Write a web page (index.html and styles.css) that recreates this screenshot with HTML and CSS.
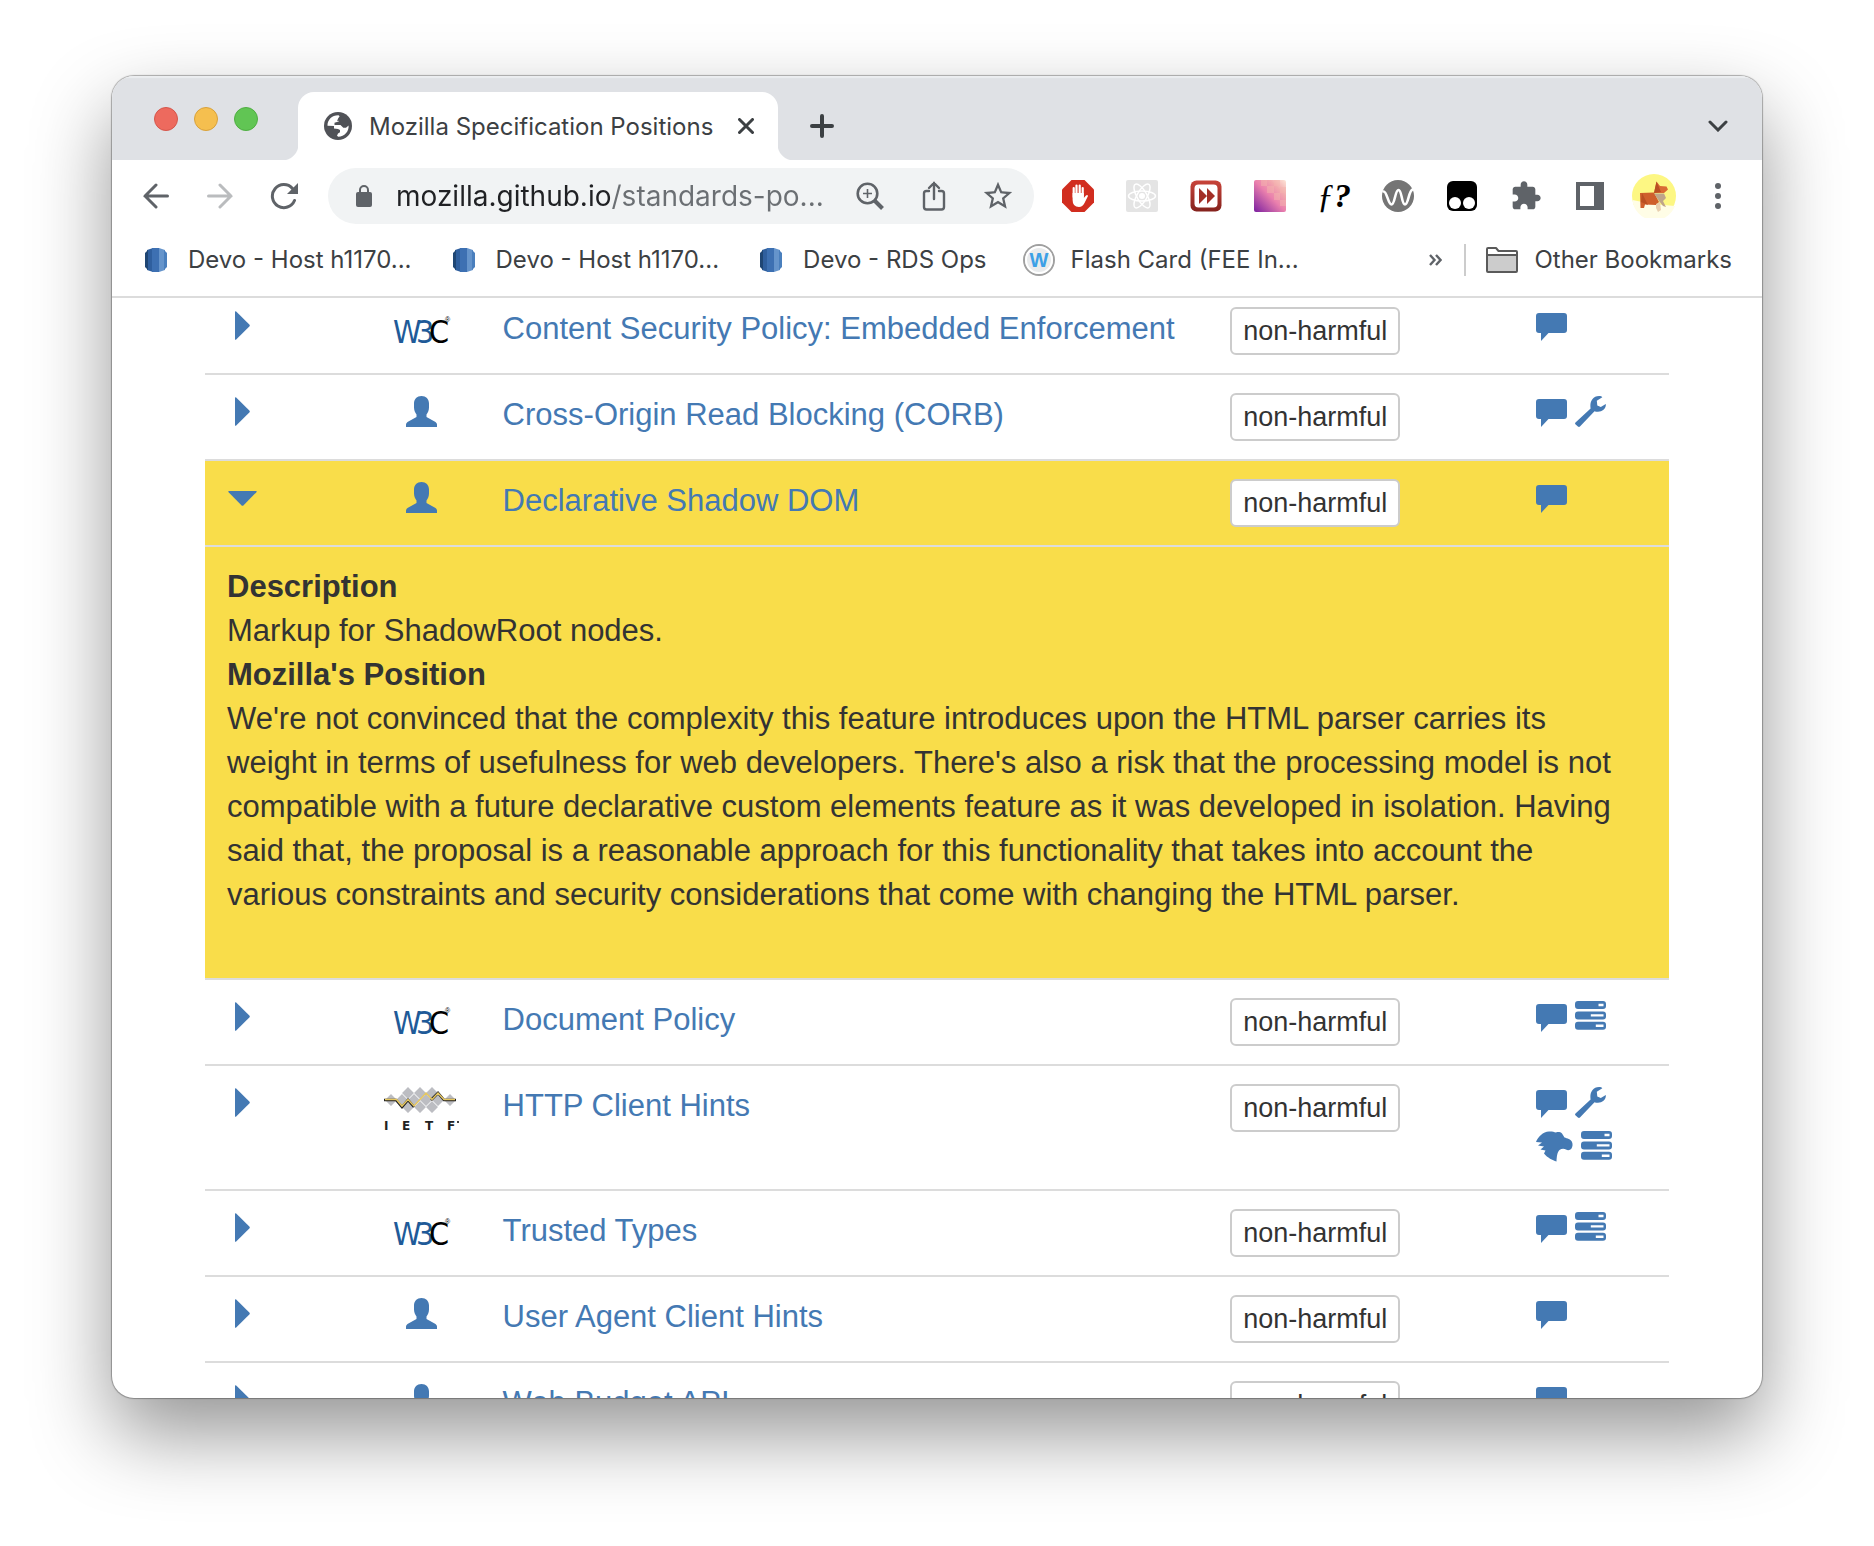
FILE: index.html
```html
<!DOCTYPE html>
<html lang="en">
<head>
<meta charset="utf-8">
<title>Mozilla Specification Positions</title>
<link rel="stylesheet" href="styles.css">
</head>
<body>
<svg class="sprite" aria-hidden="true">
  <symbol id="caret-right" viewBox="0 0 15 29"><path d="M0 1Q0-.5 1.2.6L14.3 13.400Q15.300 14.500 14.300 15.600L1.200 28.400Q0 29.500 0 28Z"/></symbol>
  <symbol id="caret-down" viewBox="0 0 29 15"><path d="M1 0Q-.5 0 .6 1.200L13.400 14.300Q14.500 15.300 15.600 14.300L28.400 1.200Q29.500 0 28 0Z"/></symbol>
  <symbol id="user" viewBox="0 0 31 31"><path d="M15.500 0C20 0 23 3 23 7.500V11.500C23 15 21.500 17 20.500 18.500V21L29.500 26Q31 27 31 28.500V31H0V28.500Q0 27 1.500 26L10.500 21V18.500C9.500 17 8 15 8 11.500V7.500C8 3 11 0 15.500 0Z"/></symbol>
  <symbol id="comment" viewBox="0 0 31 31"><path d="M3 3H28Q31 3 31 6V20Q31 23 28 23H12.500L5 31V23H3Q0 23 0 20V6Q0 3 3 3Z"/></symbol>
  <symbol id="wrench" viewBox="0 0 31 31"><path d="M.5 26.500L15.600 12.500C14.500 6 17.500 0 24 0C25.500 0 27 .5 27.300 1.200L21.800 4.800L22.300 9.500L25.800 11L30.800 8C31.300 12.500 27.500 15.800 23 15.800C21.500 15.800 20.500 15.500 19.500 15.200L5.200 30.300Q4 31.400 2.900 30.400L.4 28.200Q-.3 27.400 .5 26.500Z"/></symbol>
  <symbol id="server" viewBox="0 0 31 31"><path fill-rule="evenodd" d="M3 0H28Q31 0 31 3V5Q31 8 28 8H3Q0 8 0 5V3Q0 0 3 0ZM23.500 2.800V5.200H28.500V2.800ZM3 10.400H28Q31 10.400 31 13.400V15.400Q31 18.400 28 18.400H3Q0 18.400 0 15.400V13.400Q0 10.400 3 10.400ZM15.800 13.200V15.600H28.500V13.200ZM3 20.800H28Q31 20.800 31 23.800V25.800Q31 28.800 28 28.800H3Q0 28.800 0 25.800V23.800Q0 20.800 3 20.800ZM20.800 23.600V26H28.500V23.600Z"/></symbol>
  <symbol id="raptor" viewBox="0 0 37 31"><path d="M0 11C2 6 7 .5 13 .5C16 .3 18 1 20 1.500C22 .8 24.500 1 26 2.500L28.500 6.500C31 7.500 35 8 36 11C37 13.500 36.500 15.500 35.500 17.500C34 19.500 31.500 19.500 30 18.500C28 17.300 25.500 17.500 23.500 19C21 21.500 20.800 26 20.500 30.500C16.500 29 11.500 27 8 22.500L9.500 19.500L4.500 18.500L8 15.500L2 14.500L6 11.500Z"/></symbol>
  <symbol id="w3c" viewBox="0 0 60 44">
    <g class="w3c-text"><text x="1" y="33" fill="#205a98">W</text><text x="24" y="33" fill="#205a98">3</text><text x="37" y="33" fill="#000">C</text></g>
    <text class="w3c-reg" x="53" y="12">®</text>
  </symbol>
  <symbol id="rds" viewBox="0 0 22 24"><path fill="#2f5f9e" d="M2 2L8 0V24L2 22Z"/><path fill="#1f4674" d="M0 5L3 2V22L0 19Z"/><path fill="#3d70b2" d="M7 0H14V24H7Z"/><path fill="#6594cb" d="M14 0L20 2V22L14 24Z"/><path fill="#4a7fbd" d="M19 2L22 5V19L19 22Z"/></symbol>
</svg>

<main class="window">
  <header>
    <div class="tab-strip">
      <div class="lights">
        <button class="light red" aria-label="Close window"></button>
        <button class="light amber" aria-label="Minimise window"></button>
        <button class="light green" aria-label="Zoom window"></button>
      </div>
      <div class="tab">
        <svg width="28" height="28" viewBox="0 0 28 28"><circle cx="14" cy="14" r="14" fill="#505257"/><path fill="#fff" d="M3.500 13.800C3.200 8 8 3.200 14.500 3.300L16 4.500L14 6.800H17.500L14.500 9.500L10.500 10.800V13H16.500L19.300 15.800H22L24.600 13.500C25 19.500 20.500 24.500 14.300 24.700L13 23.800L14 21.500L16 20.300V18L14 17L10 16.500V14Z"/><path fill="#505257" d="M15.500 4.300L13 8.800L15.800 9L17.300 13L21 14.500L25 12L22 6.500Z"/></svg>
        <span class="tab-title">Mozilla Specification Positions</span>
        <button class="tab-close" aria-label="Close tab"><svg width="16" height="16" viewBox="0 0 16 16" fill="none" stroke="#3c4043" stroke-width="3" stroke-linecap="round"><path d="M1.500 1.500L14.500 14.500M14.500 1.500L1.500 14.500"/></svg></button>
      </div>
      <button class="strip-button new-tab" aria-label="New tab"><svg width="24" height="24" viewBox="0 0 24 24" fill="none" stroke="#3c4043" stroke-width="4" stroke-linecap="round"><path d="M12 2V22M2 12H22"/></svg></button>
      <button class="strip-button tab-search" aria-label="Search tabs"><svg width="20" height="12" viewBox="0 0 20 12" fill="none" stroke="#3c4043" stroke-width="3" stroke-linecap="round"><path d="M2 2L10 10L18 2"/></svg></button>
    </div>

    <div class="toolbar">
      <button class="slot" aria-label="Back"><svg width="26" height="26" viewBox="0 0 26 26" fill="none" stroke="#5f6368" stroke-width="3" stroke-linecap="round"><path d="M24.500 13H2M13 2L2 13L13 24"/></svg></button>
      <button class="slot" aria-label="Forward"><svg width="26" height="26" viewBox="0 0 26 26" fill="none" stroke="#babcbe" stroke-width="3" stroke-linecap="round"><path d="M1.500 13H24M13 2L24 13L13 24"/></svg></button>
      <button class="slot" aria-label="Reload"><svg width="28" height="28" viewBox="0 0 28 28"><path fill="none" stroke="#5f6368" stroke-width="3" stroke-linecap="round" d="M24.500 18.500A11.500 11.500 0 1 1 22.500 6.500"/><path fill="#5f6368" d="M28 1V12H17Z"/></svg></button>
      <div class="omnibox">
        <svg width="16" height="22" viewBox="0 0 16 22"><rect y="7" width="16" height="15" rx="2" fill="#5f6368"/><path d="M4 8V5A4 4 0 0 1 12 5V8" fill="none" stroke="#5f6368" stroke-width="2"/></svg>
        <input class="url" type="text" aria-label="Address" value="mozilla.github.io/standards-po...">
        <button class="slot" aria-label="Zoom"><svg width="28" height="28" viewBox="0 0 28 28" fill="none" stroke="#5f6368"><circle cx="11.500" cy="11.500" r="9.800" stroke-width="2.600"/><path d="M11.500 7V16M7 11.500H16" stroke-width="1.600"/><path d="M18.500 18.500L26.500 26.500" stroke-width="4"/></svg></button>
        <button class="slot" aria-label="Share"><svg width="24" height="30" viewBox="0 0 24 30" fill="none" stroke="#5f6368" stroke-width="2.400" stroke-linecap="round"><path d="M7 10H4.500Q2 10 2 12.500V26Q2 28.500 4.500 28.500H19.500Q22 28.500 22 26V12.500Q22 10 19.500 10H17M12 18V2M7 7L12 2L17 7"/></svg></button>
        <button class="slot" aria-label="Bookmark this tab"><svg width="34" height="34" viewBox="0 0 24 24" fill="#5f6368"><path d="M22 9.240l-7.190-.62L12 2 9.190 8.630 2 9.240l5.460 4.730L5.820 21 12 17.270 18.180 21l-1.630-7.030L22 9.240zM12 15.400l-3.760 2.270 1-4.280-3.320-2.880 4.380-.38L12 6.100l1.710 4.040 4.380.38-3.320 2.880 1 4.280L12 15.400z"/></svg></button>
      </div>
      <button class="slot" aria-label="Ad blocker"><svg width="32" height="32" viewBox="0 0 32 32"><path fill="#d12d1f" d="M9.500 0H22.500L32 9.500V22.500L22.500 32H9.500L0 22.500V9.500Z"/><path fill="none" stroke="#fff" stroke-width="2.200" stroke-linecap="round" d="M11.700 17V8M14.500 16V5.500M17.700 16V5.500M20.700 17V8"/><path fill="#fff" d="M10.600 13H21.800V18L24 15.500Q25.500 14.500 26 16L22.500 23Q20.500 27 17 27Q10.600 27 10.600 20Z"/></svg></button>
      <button class="slot" aria-label="React tools"><svg width="32" height="32" viewBox="0 0 32 32"><rect width="32" height="32" rx="2" fill="#e4e4e4"/><g fill="none" stroke="#fff" stroke-width="1.500"><ellipse cx="16" cy="16" rx="13.500" ry="5"/><ellipse cx="16" cy="16" rx="13.500" ry="5" transform="rotate(60 16 16)"/><ellipse cx="16" cy="16" rx="13.500" ry="5" transform="rotate(120 16 16)"/></g><circle cx="16" cy="16" r="3" fill="#fff"/></svg></button>
      <button class="slot" aria-label="Fast forward"><svg width="32" height="32" viewBox="0 0 32 32"><defs><linearGradient id="ff" x1="0" y1="0" x2="0" y2="1"><stop offset="0" stop-color="#c9443a"/><stop offset="1" stop-color="#84221d"/></linearGradient></defs><rect x=".5" y=".5" width="31" height="31" rx="6" fill="url(#ff)"/><rect x="4.500" y="4.500" width="23" height="23" rx="4" fill="#fff"/><path fill="#a32f27" d="M9 8L17 16L9 24ZM17 8L25 16L17 24Z"/></svg></button>
      <button class="slot" aria-label="Pixel ruler"><svg width="32" height="32" viewBox="0 0 32 32"><defs><linearGradient id="px" x1="0" y1="1" x2="1" y2="0"><stop offset="0" stop-color="#7a1fa0"/><stop offset=".5" stop-color="#ea80ad"/><stop offset=".75" stop-color="#f2a9ae"/><stop offset="1" stop-color="#fde6d8"/></linearGradient></defs><rect width="32" height="32" rx="2" fill="url(#px)"/><path fill="#f4b4ae" fill-opacity=".5" d="M7 0H13V6H7ZM13 6H20V13H13ZM20 13H26V20H20ZM26 20H32V26H26ZM20 0H26V6H20ZM26 7H32V13H26Z"/></svg></button>
      <button class="slot fquery" aria-label="Font finder"><span>ƒ<b>?</b></span></button>
      <button class="slot" aria-label="Wave"><svg width="32" height="32" viewBox="0 0 32 32"><circle cx="16" cy="16" r="16" fill="#757575"/><path fill="none" stroke="#fff" stroke-width="2.600" stroke-linecap="round" d="M1.500 11.500C5 11 6 24.500 9.500 24.500S13 10 16.500 10S19.500 24.500 23 24.500S26.500 11 30.500 9.500"/></svg></button>
      <button class="slot" aria-label="User scripts"><svg width="30" height="30" viewBox="0 0 30 30"><rect width="30" height="30" rx="6"/><circle cx="8" cy="22" r="6" fill="#fff"/><circle cx="22" cy="22" r="6" fill="#fff"/></svg></button>
      <button class="slot" aria-label="Extensions"><svg width="32" height="32" viewBox="0 0 24 24" fill="#5f6368"><path d="M20.500 11H19V7c0-1.100-.9-2-2-2h-4V3.500C13 2.120 11.880 1 10.500 1S8 2.120 8 3.500V5H4c-1.100 0-1.990.9-1.990 2v3.800H3.500c1.490 0 2.700 1.210 2.700 2.700s-1.210 2.700-2.700 2.700H2V20c0 1.100.9 2 2 2h3.800v-1.500c0-1.490 1.210-2.700 2.700-2.700 1.490 0 2.700 1.210 2.700 2.700V22H17c1.100 0 2-.9 2-2v-4h1.500c1.380 0 2.500-1.120 2.500-2.500S21.880 11 20.500 11z"/></svg></button>
      <button class="slot" aria-label="Side panel"><svg width="28" height="28" viewBox="0 0 28 28"><path fill="#5f6368" fill-rule="evenodd" d="M0 0H28V28H0ZM4 4V24H18V4Z"/></svg></button>
      <button class="slot" aria-label="Profile"><svg width="44" height="44" viewBox="0 0 44 44"><circle cx="22" cy="22" r="22" fill="#fdf783"/><path fill="#fffde6" d="M.5 26L20 30L43 32A22 22 0 0 1 .5 26Z"/><path fill="#cf5f2c" d="M8 19L22 18.500L27 28L24 31L13 30.500L12 34H8.500Z"/><path fill="#b94f22" d="M10 19L16 31L9 28Z"/><path fill="#d96a33" d="M22 19L24.500 7.500L28 12L34.500 12.500L36 15.500L32 19Z"/><path fill="#b94f22" d="M24.500 7.500L29 18L22 19Z"/><path fill="#bfa58a" d="M22 19.500H32L34 24L31 27L34 33L31 32L27 27Z"/><path fill="#e9cfb0" d="M24 30L28 28L29 36L26 38L24 34Z"/></svg></button>
      <button class="slot" aria-label="Menu"><svg width="6" height="26" viewBox="0 0 6 26" fill="#5f6368"><circle cx="3" cy="3" r="3"/><circle cx="3" cy="13" r="3"/><circle cx="3" cy="23" r="3"/></svg></button>
    </div>

    <nav class="bookmarks">
      <a class="bookmark" href="#"><span class="favicon"><svg width="22" height="24"><use href="#rds"/></svg></span>Devo - Host h1170...</a>
      <a class="bookmark" href="#"><span class="favicon"><svg width="22" height="24"><use href="#rds"/></svg></span>Devo - Host h1170...</a>
      <a class="bookmark" href="#"><span class="favicon"><svg width="22" height="24"><use href="#rds"/></svg></span>Devo - RDS Ops</a>
      <a class="bookmark" href="#"><span class="favicon"><svg width="32" height="32" viewBox="0 0 32 32"><circle cx="16" cy="16" r="15" fill="#e9ebec" stroke="#a0a0a0" stroke-width="2"/><circle cx="16" cy="16" r="13" fill="none" stroke="#fff" stroke-width="2"/><text class="w-mark" x="16" y="23" text-anchor="middle">W</text></svg></span>Flash Card (FEE In...</a>
      <button class="more" aria-label="More bookmarks"><svg width="13" height="12" viewBox="0 0 13 12" fill="none" stroke="#5f6368" stroke-width="2.400"><path d="M1 1L5.500 6L1 11M7 1L11.500 6L7 11"/></svg></button>
      <a class="other" href="#"><svg width="32" height="26" viewBox="0 0 32 26"><path fill="#fff" stroke="#5a5a5a" stroke-width="2" stroke-linejoin="round" d="M1 24V2Q1 1 2 1H10L12.500 4H30Q31 4 31 5V24Q31 25 30 25H2Q1 25 1 24Z"/><path fill="#ccc" d="M2 9H30V24H2Z"/><path stroke="#5a5a5a" stroke-width="2" d="M1 8H31"/></svg>Other Bookmarks</a>
    </nav>
  </header>

  <section class="viewport">
    <table class="positions">
      <colgroup><col class="c-toggle"><col class="c-org"><col class="c-title"><col class="c-position"><col class="c-links"></colgroup>
      <tbody>
        <tr>
          <td><button class="toggle" aria-label="Expand"><svg class="right"><use href="#caret-right"/></svg></button></td>
          <td class="org"><svg class="w3c"><use href="#w3c"/></svg></td>
          <td><a href="#">Content Security Policy: Embedded Enforcement</a></td>
          <td><span class="badge">non-harmful</span></td>
          <td><div class="links"><a href="#" aria-label="Discussion"><svg class="icon"><use href="#comment"/></svg></a></div></td>
        </tr>
        <tr>
          <td><button class="toggle" aria-label="Expand"><svg class="right"><use href="#caret-right"/></svg></button></td>
          <td class="org"><svg class="icon"><use href="#user"/></svg></td>
          <td><a href="#">Cross-Origin Read Blocking (CORB)</a></td>
          <td><span class="badge">non-harmful</span></td>
          <td><div class="links"><a href="#" aria-label="Discussion"><svg class="icon"><use href="#comment"/></svg></a><a href="#" aria-label="Bug"><svg class="icon"><use href="#wrench"/></svg></a></div></td>
        </tr>
        <tr class="open">
          <td><button class="toggle" aria-label="Collapse"><svg class="down"><use href="#caret-down"/></svg></button></td>
          <td class="org"><svg class="icon"><use href="#user"/></svg></td>
          <td><a href="#">Declarative Shadow DOM</a></td>
          <td><span class="badge">non-harmful</span></td>
          <td><div class="links"><a href="#" aria-label="Discussion"><svg class="icon"><use href="#comment"/></svg></a></div></td>
        </tr>
        <tr class="open">
          <td class="detail" colspan="5">
            <dl>
              <dt>Description</dt>
              <dd>Markup for ShadowRoot nodes.</dd>
              <dt>Mozilla's Position</dt>
              <dd>We're not convinced that the complexity this feature introduces upon the HTML parser carries its weight in terms of usefulness for web developers. There's also a risk that the processing model is not compatible with a future declarative custom elements feature as it was developed in isolation. Having said that, the proposal is a reasonable approach for this functionality that takes into account the various constraints and security considerations that come with changing the HTML parser.</dd>
            </dl>
          </td>
        </tr>
        <tr>
          <td><button class="toggle" aria-label="Expand"><svg class="right"><use href="#caret-right"/></svg></button></td>
          <td class="org"><svg class="w3c"><use href="#w3c"/></svg></td>
          <td><a href="#">Document Policy</a></td>
          <td><span class="badge">non-harmful</span></td>
          <td><div class="links"><a href="#" aria-label="Discussion"><svg class="icon"><use href="#comment"/></svg></a><a href="#" aria-label="Platform status"><svg class="icon"><use href="#server"/></svg></a></div></td>
        </tr>
        <tr>
          <td><button class="toggle" aria-label="Expand"><svg class="right"><use href="#caret-right"/></svg></button></td>
          <td class="org"><svg class="ietf" viewBox="-2 0 80 48">
            <g fill="#bcbdc2"><path d="M1 13L7 7L13 13L7 19ZM12 13L18 7L24 13L18 19ZM18 6L24 0L30 6L24 12ZM18 20L24 14L30 20L24 26ZM24 13L30 7L36 13L30 19ZM30 6L36 0L42 6L36 12ZM30 20L36 14L42 20L36 26ZM36 13L42 7L48 13L42 19ZM42 6L48 0L54 6L48 12ZM42 20L48 14L54 20L48 26ZM48 13L54 7L60 13L54 19ZM60 13L66 7L72 13L66 19Z"/></g>
            <path fill="none" stroke="#222" stroke-width="2.600" d="M0 13H12L18 20L24 13L30 20M47 13L54 6L60 13H72"/>
            <path fill="none" stroke="#e6c760" stroke-width="1.500" d="M1 12.500H12.500L18 19L24 12.500L30 19L42 6L48 12.500L54 6L60 12.500H71"/>
            <g class="ietf-text"><text x="0" y="43">I</text><text x="18" y="43">E</text><text x="41" y="43">T</text><text x="63" y="43">F</text></g><circle cx="74" cy="35" r="1"/>
          </svg></td>
          <td><a href="#">HTTP Client Hints</a></td>
          <td><span class="badge">non-harmful</span></td>
          <td><div class="links"><a href="#" aria-label="Discussion"><svg class="icon"><use href="#comment"/></svg></a><a href="#" aria-label="Bug"><svg class="icon"><use href="#wrench"/></svg></a><a href="#" aria-label="MDN"><svg class="raptor"><use href="#raptor"/></svg></a><a href="#" aria-label="Platform status"><svg class="icon"><use href="#server"/></svg></a></div></td>
        </tr>
        <tr>
          <td><button class="toggle" aria-label="Expand"><svg class="right"><use href="#caret-right"/></svg></button></td>
          <td class="org"><svg class="w3c"><use href="#w3c"/></svg></td>
          <td><a href="#">Trusted Types</a></td>
          <td><span class="badge">non-harmful</span></td>
          <td><div class="links"><a href="#" aria-label="Discussion"><svg class="icon"><use href="#comment"/></svg></a><a href="#" aria-label="Platform status"><svg class="icon"><use href="#server"/></svg></a></div></td>
        </tr>
        <tr>
          <td><button class="toggle" aria-label="Expand"><svg class="right"><use href="#caret-right"/></svg></button></td>
          <td class="org"><svg class="icon"><use href="#user"/></svg></td>
          <td><a href="#">User Agent Client Hints</a></td>
          <td><span class="badge">non-harmful</span></td>
          <td><div class="links"><a href="#" aria-label="Discussion"><svg class="icon"><use href="#comment"/></svg></a></div></td>
        </tr>
        <tr>
          <td><button class="toggle" aria-label="Expand"><svg class="right"><use href="#caret-right"/></svg></button></td>
          <td class="org"><svg class="icon"><use href="#user"/></svg></td>
          <td><a href="#">Web Budget API</a></td>
          <td><span class="badge">non-harmful</span></td>
          <td><div class="links"><a href="#" aria-label="Discussion"><svg class="icon"><use href="#comment"/></svg></a></div></td>
        </tr>
      </tbody>
    </table>
  </section>
</main>
</body>
</html>
```
FILE: styles.css
```css
* { box-sizing: border-box; }

body {
  margin: 0;
  height: 100vh;
  padding: 76px 112px 148px;
  background: #fff;
  overflow: hidden;
  font-family: Inter, "Liberation Sans", sans-serif;
  color: #3c4043;
}

button {
  padding: 0;
  border: 0;
  background: none;
  font: inherit;
  color: inherit;
}

a { text-decoration: none; color: inherit; }
svg { display: block; flex: none; }
.sprite { display: none; }

.window {
  display: flex;
  flex-direction: column;
  height: 100%;
  overflow: hidden;
  border-radius: 22px;
  background: #fff;
  box-shadow: 0 0 1px 1px rgba(0, 0, 0, .3), 0 36px 80px rgba(0, 0, 0, .42);
}

/* Tab strip */
.tab-strip {
  display: flex;
  height: 84px;
  padding: 16px 12px 0 42px;
  background: #dfe1e5;
  box-shadow: inset 0 2px 1px #eceef0;
}

.lights { display: flex; gap: 16px; margin: 15px 40px 0 0; }
.light { width: 24px; height: 24px; border-radius: 50%; border: 1px solid; }
.red { background: #ed6a5e; border-color: #d5564b; }
.amber { background: #f5bf4f; border-color: #d8a13b; }
.green { background: #61c554; border-color: #4fae42; }

.tab {
  position: relative;
  display: flex;
  align-items: center;
  width: 480px;
  padding: 0 24px 0 26px;
  border-radius: 16px 16px 0 0;
  background: #fff;
}
.tab::before,
.tab::after {
  content: "";
  position: absolute;
  bottom: 0;
  width: 16px;
  height: 16px;
}
.tab::before { right: 100%; background: radial-gradient(circle at 0 0, transparent 16px, #fff 17px); }
.tab::after { left: 100%; background: radial-gradient(circle at 100% 0, transparent 16px, #fff 17px); }
.tab-title { flex: 1; margin-left: 17px; font-size: 24px; white-space: nowrap; }
.strip-button { display: grid; place-items: center; width: 64px; }
.new-tab { margin-left: 12px; }
.tab-search { margin-left: auto; }

/* Toolbar */
.toolbar { display: flex; align-items: center; height: 72px; padding: 0 12px; }
.slot { display: grid; place-items: center; flex: none; width: 64px; height: 56px; }
.omnibox {
  display: flex;
  align-items: center;
  flex: 1;
  min-width: 0;
  height: 56px;
  margin: 0 12px;
  padding: 0 4px 0 28px;
  border-radius: 28px;
  background: #f1f3f4;
}
.url {
  flex: 1;
  min-width: 0;
  margin-left: 24px;
  padding: 0;
  border: 0;
  outline: 0;
  font: 28px Inter, "Liberation Sans", sans-serif;
  color: transparent;
  background: linear-gradient(90deg, #202124 214px, #6b6f73 214px);
  -webkit-background-clip: text;
  background-clip: text;
}
.fquery { font: italic 34px "Liberation Serif", serif; color: #000; }

/* Bookmarks */
.bookmarks {
  display: flex;
  align-items: center;
  height: 66px;
  padding: 0 30px 9px 28px;
  border-bottom: 2px solid #dcdcdc;
  font-size: 24px;
  white-space: nowrap;
}
.bookmark { display: flex; align-items: center; gap: 16px; margin-right: 36px; }
.favicon { display: grid; place-items: center; width: 32px; height: 32px; }
.w-mark { font: bold 20px "Liberation Sans", sans-serif; fill: #3ba0e6; }
.more { margin-left: auto; margin-right: 22px; }
.other {
  display: flex;
  align-items: center;
  gap: 16px;
  height: 32px;
  padding-left: 20px;
  border-left: 2px solid #ccc;
}

/* Page */
.viewport { flex: 1; min-height: 0; overflow: hidden; padding: 0 93px; }

.positions {
  width: 100%;
  margin-top: -11px;
  table-layout: fixed;
  border-collapse: separate;
  border-spacing: 0;
  font: 31px/44px "Liberation Sans", Arial, sans-serif;
  color: #333;
}
.c-toggle { width: 10.5%; }
.c-org { width: 8.6%; }
.c-title { width: 49.7%; }
.c-position { width: 20.9%; }
.c-links { width: 10.3%; }

td {
  height: 86px;
  padding: 18px 18px 16px;
  border-top: 2px solid #dcdcdc;
  vertical-align: top;
}
td a { color: #4479b3; }
.open { background: #f9dd4a; }

.toggle { display: flex; width: 29px; height: 32px; margin-top: 4px; padding-left: 12px; color: #4479b3; }
.open .toggle { padding: 8px 0 0 5px; width: 34px; }
.right { width: 15px; height: 29px; fill: #4479b3; }
.down { width: 29px; height: 15px; fill: #4479b3; }

.org svg { margin: 3px auto 0; }
.icon { width: 31px; height: 31px; fill: #4479b3; }
.raptor { width: 37px; height: 31px; fill: #4479b3; }
.org .w3c { width: 60px; height: 44px; }
.w3c-text { font: 32px "Liberation Sans Narrow", "DejaVu Sans Condensed", sans-serif; }
.w3c-reg { font: 7px "Liberation Sans", sans-serif; }
.ietf { width: 80px; height: 48px; }
.ietf-text { font: bold 12px "DejaVu Sans", sans-serif; fill: #222; }

.badge {
  display: block;
  width: 170px;
  height: 48px;
  border: 2px solid #ccc;
  border-radius: 6px;
  background: #fff;
  font-size: 27px;
  text-align: center;
}

.links { display: flex; flex-wrap: wrap; gap: 13px 8px; width: 80px; padding: 3px 0 11px; }

.detail { padding: 18px 40px 61px 22px; }
dl, dd { margin: 0; }
dt { font-weight: bold; }
```
